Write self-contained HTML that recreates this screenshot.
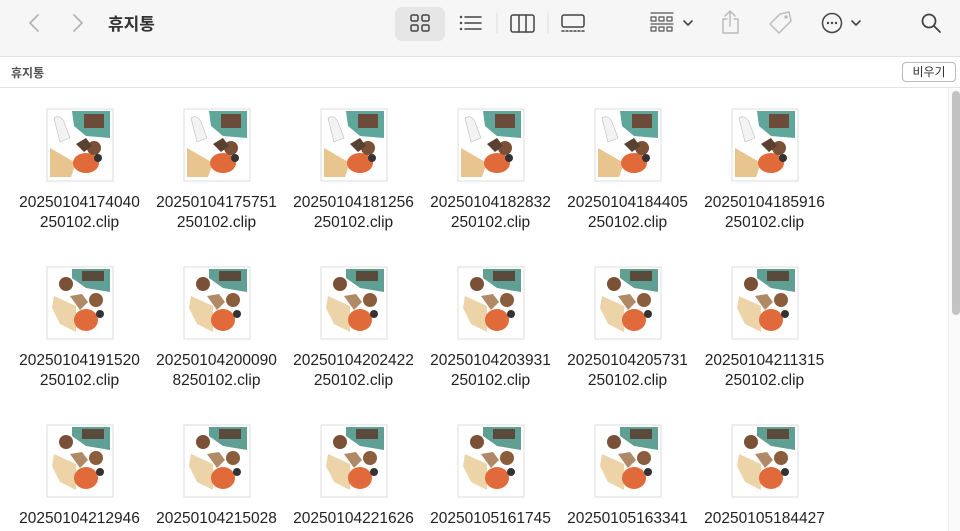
<!DOCTYPE html>
<html><head><meta charset="utf-8"><style>
*{margin:0;padding:0;box-sizing:border-box}
body{width:960px;height:531px;overflow:hidden;background:#fff;font-family:"Liberation Sans","Noto Sans CJK KR",sans-serif;position:relative}
.tb{position:absolute;left:0;top:0;width:960px;height:57px;background:#f6f6f6;border-bottom:1px solid #e2e2e2}
.title{position:absolute;left:108px;top:10px;font-size:17px;font-weight:bold;color:#333}
.path{position:absolute;left:0;top:57px;width:960px;height:31px;border-bottom:1px solid #e4e4e4;background:#fff}
.path .t{position:absolute;left:11px;top:7px;font-size:12px;color:#555;font-weight:bold}
.btn{position:absolute;left:902px;top:62px;width:54px;height:20px;border:1px solid #bbb;border-radius:4px;font-size:12px;text-align:center;line-height:18px;color:#333;background:#fff}
.item{position:absolute;width:137px;text-align:center;font-size:15.5px;color:#222;line-height:20px;margin-left:-1px}
.item svg{display:block;margin:0 auto 11px}
.sb{position:absolute;left:948px;top:88px;width:12px;height:443px;background:#fafafa;border-left:1px solid #eee}
.thumb{position:absolute;left:952px;top:91px;width:8px;height:224px;background:#c2c2c2;border-radius:4px}
</style></head><body>
<div class="tb">
<svg width="960" height="57" style="position:absolute;left:0;top:0" fill="none" stroke-linecap="round" stroke-linejoin="round">
<path d="M38 15 L30 23 L38 31" stroke="#b5b5b5" stroke-width="1.8"/>
<path d="M74 15 L82 23 L74 31" stroke="#b5b5b5" stroke-width="1.8"/>
<rect x="395" y="7" width="50" height="34" rx="7" fill="#e6e6e6" stroke="none"/>
<g stroke="#444" stroke-width="1.5"><rect x="411" y="15" width="7" height="6" rx="1.5"/><rect x="422" y="15" width="7" height="6" rx="1.5"/><rect x="411" y="25" width="7" height="6" rx="1.5"/><rect x="422" y="25" width="7" height="6" rx="1.5"/></g>
<g stroke="#444" stroke-width="1.5"><path d="M465 17h16M465 23h16M465 29h16"/><circle cx="461" cy="17" r=".5"/><circle cx="461" cy="23" r=".5"/><circle cx="461" cy="29" r=".5"/></g>
<path d="M497 13v20M548 13v20" stroke="#ddd"/>
<g stroke="#444" stroke-width="1.5"><rect x="511" y="15" width="23" height="17" rx="2"/><path d="M519 15v17M526 15v17"/></g>
<g stroke="#444" stroke-width="1.5"><rect x="562" y="15" width="22" height="12" rx="2"/><path d="M562 31h22" stroke-dasharray="2 2"/></g>
<g stroke="#555" stroke-width="1.2"><path d="M651 13h22"/><rect x="651" y="17" width="5" height="4"/><rect x="659" y="17" width="5" height="4"/><rect x="667" y="17" width="5" height="4"/><path d="M651 24h22"/><rect x="651" y="27" width="5" height="4"/><rect x="659" y="27" width="5" height="4"/><rect x="667" y="27" width="5" height="4"/></g>
<path d="M684 21l4 4 4-4" stroke="#444" stroke-width="1.6"/>
<g stroke="#bbb" stroke-width="1.5"><path d="M730 11v15M725 16l5-5 5 5M727 19h-4v14h15v-14h-4"/></g>
<g stroke="#bbb" stroke-width="1.5"><path d="M780 14l9-2 2 9-12 12-9-9z"/><circle cx="786" cy="17" r="1"/></g>
<g stroke="#444" stroke-width="1.5"><circle cx="832" cy="23" r="9.5"/></g>
<g fill="#444"><circle cx="828" cy="23" r="1.2"/><circle cx="832" cy="23" r="1.2"/><circle cx="836" cy="23" r="1.2"/></g>
<path d="M852 21l4 4 4-4" stroke="#444" stroke-width="1.6"/>
<g stroke="#444" stroke-width="1.8"><circle cx="929" cy="21" r="6.5"/><path d="M934 26l6 6"/></g>
</svg>
<div class="title">휴지통</div>
</div>
<div class="path"><div class="t">휴지통</div></div>
<div class="btn">비우기</div>

<svg width="0" height="0" style="position:absolute">
<defs>
<symbol id="a" viewBox="0 0 68 74">
<rect x="1" y="1" width="66" height="72" fill="#fff" stroke="#ddd"/>
<polygon points="4,40 30,55 25,69 4,69" fill="#e8c48e"/>
<polygon points="26,3 64,3 64,30 40,28 28,18" fill="#5fa79a"/>
<rect x="38" y="6" width="20" height="14" fill="#6b4c3a"/>
<path d="M8 10 q6 -4 10 4 l6 16 -10 4z" fill="#f3f3f3" stroke="#bbb" stroke-width=".6"/>
<ellipse cx="40" cy="55" rx="13" ry="10" fill="#e06a3a"/>
<circle cx="48" cy="40" r="7" fill="#7a5136"/>
<path d="M30 36 l10 -6 6 8 -8 6z" fill="#5a4030"/>
<circle cx="52" cy="50" r="4" fill="#333"/>
</symbol>
<symbol id="b" viewBox="0 0 68 74">
<rect x="1" y="1" width="66" height="72" fill="#fff" stroke="#ddd"/>
<polygon points="8,30 30,40 30,66 14,58 6,42" fill="#ecd3a8"/>
<polygon points="26,3 64,3 64,26 40,22 26,12" fill="#5f9f94"/>
<rect x="36" y="5" width="22" height="10" fill="#5a4a3c"/>
<circle cx="20" cy="18" r="7" fill="#7a5136"/>
<ellipse cx="40" cy="54" rx="12" ry="11" fill="#e06a3a"/>
<circle cx="50" cy="34" r="7" fill="#8a5d3c"/>
<path d="M24 30 l12 -2 6 8 -8 8z" fill="#b08a66"/>
<circle cx="54" cy="48" r="4" fill="#333"/>
</symbol>
</defs></svg>

<div class="item" style="left:12px;top:108px"><svg width="68" height="74"><use href="#a"/></svg>20250104174040<br>250102.clip</div>
<div class="item" style="left:149px;top:108px"><svg width="68" height="74"><use href="#a"/></svg>20250104175751<br>250102.clip</div>
<div class="item" style="left:286px;top:108px"><svg width="68" height="74"><use href="#a"/></svg>20250104181256<br>250102.clip</div>
<div class="item" style="left:423px;top:108px"><svg width="68" height="74"><use href="#a"/></svg>20250104182832<br>250102.clip</div>
<div class="item" style="left:560px;top:108px"><svg width="68" height="74"><use href="#a"/></svg>20250104184405<br>250102.clip</div>
<div class="item" style="left:697px;top:108px"><svg width="68" height="74"><use href="#a"/></svg>20250104185916<br>250102.clip</div>

<div class="item" style="left:12px;top:266px"><svg width="68" height="74"><use href="#b"/></svg>20250104191520<br>250102.clip</div>
<div class="item" style="left:149px;top:266px"><svg width="68" height="74"><use href="#b"/></svg>20250104200090<br>8250102.clip</div>
<div class="item" style="left:286px;top:266px"><svg width="68" height="74"><use href="#b"/></svg>20250104202422<br>250102.clip</div>
<div class="item" style="left:423px;top:266px"><svg width="68" height="74"><use href="#b"/></svg>20250104203931<br>250102.clip</div>
<div class="item" style="left:560px;top:266px"><svg width="68" height="74"><use href="#b"/></svg>20250104205731<br>250102.clip</div>
<div class="item" style="left:697px;top:266px"><svg width="68" height="74"><use href="#b"/></svg>20250104211315<br>250102.clip</div>

<div class="item" style="left:12px;top:424px"><svg width="68" height="74"><use href="#b"/></svg>20250104212946</div>
<div class="item" style="left:149px;top:424px"><svg width="68" height="74"><use href="#b"/></svg>20250104215028</div>
<div class="item" style="left:286px;top:424px"><svg width="68" height="74"><use href="#b"/></svg>20250104221626</div>
<div class="item" style="left:423px;top:424px"><svg width="68" height="74"><use href="#b"/></svg>20250105161745</div>
<div class="item" style="left:560px;top:424px"><svg width="68" height="74"><use href="#b"/></svg>20250105163341</div>
<div class="item" style="left:697px;top:424px"><svg width="68" height="74"><use href="#b"/></svg>20250105184427</div>

<div class="sb"></div><div class="thumb"></div>
</body></html>
